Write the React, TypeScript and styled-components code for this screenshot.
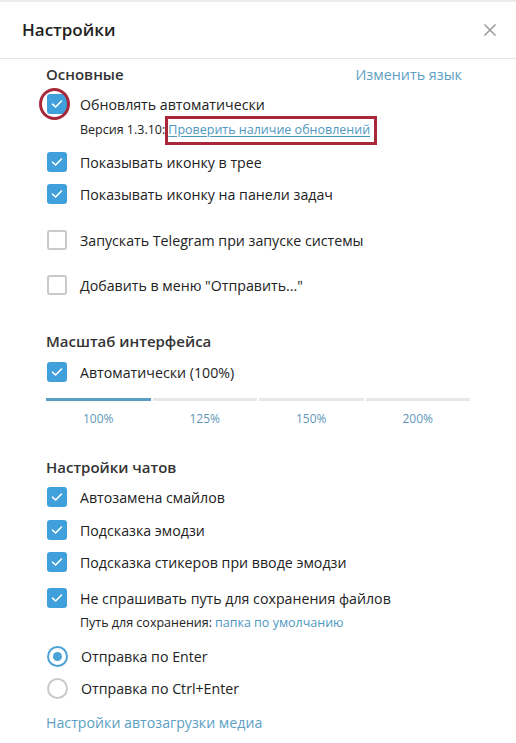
import React from "react";
import styled, { createGlobalStyle } from "styled-components";

const Global = createGlobalStyle`
  html, body { margin: 0; padding: 0; background: #fff; }
  body { font-family: "Open Sans", "Noto Sans", Arial, sans-serif; color: #222; }
  * { box-sizing: border-box; }
`;

const Page = styled.div`
  width: 516px;
  height: 743px;
  background: #fff;
  border-top: 2px solid #ececec;
  position: relative;
  overflow: hidden;
`;

const Header = styled.div`
  height: 57px;
  display: flex;
  align-items: center;
  justify-content: space-between;
  padding: 0 18px 0 22px;
  border-bottom: 1px solid #e4e4e4;
`;

const Title = styled.div`
  font-size: 17px;
  font-weight: 600;
  color: #222;
  margin-top: -1px;
`;

const CloseBtn = styled.div`
  width: 16px;
  height: 16px;
  display: flex;
  align-items: center;
  justify-content: center;
`;

const Body = styled.div`
  padding: 3px 46px 0 46px;
  display: flex;
  flex-direction: column;
`;

const SectionHead = styled.div<{ $mt?: number }>`
  height: 24px;
  margin-top: ${(p) => p.$mt ?? 0}px;
  display: flex;
  align-items: center;
  justify-content: space-between;
  font-size: 15px;
  font-weight: 600;
  color: #333;
`;

const HeadLink = styled.span`
  font-weight: 400;
  color: #5c9fc3;
  font-size: 14.3px;
  margin-right: 8px;
`;

const Row = styled.div<{ $mt?: number; $h?: number }>`
  height: ${(p) => p.$h ?? 32}px;
  margin-top: ${(p) => p.$mt ?? 0}px;
  display: flex;
  align-items: center;
  gap: 13px;
  font-size: 14.2px;
  color: #222;
  position: relative;
`;

const Box = styled.div<{ $on: boolean }>`
  width: 20px;
  height: 20px;
  border-radius: 3px;
  flex: none;
  margin-left: 1px;
  display: flex;
  align-items: center;
  justify-content: center;
  background: ${(p) => (p.$on ? "#40a0db" : "#fff")};
  border: ${(p) => (p.$on ? "none" : "2px solid #c9c9c9")};
`;

const Radio = styled.div<{ $on: boolean }>`
  width: 21px;
  height: 21px;
  border-radius: 50%;
  flex: none;
  margin-left: 1px;
  display: flex;
  align-items: center;
  justify-content: center;
  border: 2px solid ${(p) => (p.$on ? "#4aa2d6" : "#c9c9c9")};
  &::after {
    content: "";
    display: ${(p) => (p.$on ? "block" : "none")};
    width: 9px;
    height: 9px;
    border-radius: 50%;
    background: #4aa2d6;
  }
`;

const SubLine = styled.div<{ $mt?: number }>`
  height: 14px;
  margin-top: ${(p) => p.$mt ?? 0}px;
  padding-left: 34px;
  display: flex;
  align-items: center;
  font-size: 12.5px;
  color: #222;
  position: relative;
`;

const Link = styled.span<{ $u?: boolean }>`
  color: #4e97bf;
  text-decoration: ${(p) => (p.$u ? "underline" : "none")};
  text-underline-offset: 2px;
  margin-left: 3px;
`;

const RedRect = styled.div`
  position: absolute;
  left: 119px;
  top: -6px;
  width: 212px;
  height: 29px;
  border: 3px solid #a8283a;
  pointer-events: none;
`;

const RedCircle = styled.div`
  position: absolute;
  left: -7px;
  top: 2px;
  width: 31px;
  height: 32px;
  border-radius: 50%;
  border: 3px solid #a8283a;
  pointer-events: none;
`;

const Track = styled.div`
  margin-top: 10px;
  display: grid;
  grid-template-columns: repeat(4, 1fr);
  column-gap: 2px;
  width: 424px;
`;

const Seg = styled.div<{ $on: boolean }>`
  height: 3px;
  background: ${(p) => (p.$on ? "#5a9cc2" : "#e7e7e7")};
`;

const ScaleLabels = styled.div`
  margin-top: 10px;
  display: grid;
  grid-template-columns: repeat(4, 1fr);
  column-gap: 2px;
  width: 424px;
`;

const ScaleLabel = styled.div`
  height: 16px;
  line-height: 16px;
  text-align: center;
  font-size: 12px;
  color: #5e97b8;
`;

const BottomLink = styled.div<{ $mt?: number }>`
  height: 24px;
  margin-top: ${(p) => p.$mt ?? 0}px;
  display: flex;
  align-items: center;
  font-size: 14.2px;
  color: #5c9fc3;
`;

const Check = () => (
  <svg width="12" height="10" viewBox="0 0 12 10">
    <path d="M1.5 5.2 L4.6 8 L10.5 2" fill="none" stroke="#fff" strokeWidth="1.6" strokeLinecap="round" strokeLinejoin="round" />
  </svg>
);

const CB = ({ on, label, mt, children }: { on: boolean; label: string; mt?: number; children?: React.ReactNode }) => (
  <Row $mt={mt}>
    <Box $on={on}>{on && <Check />}</Box>
    <span>{label}</span>
    {children}
  </Row>
);

const RB = ({ on, label, mt }: { on: boolean; label: string; mt?: number }) => (
  <Row $mt={mt}>
    <Radio $on={on} />
    <span>{label}</span>
  </Row>
);

export default function App() {
  const scales = ["100%", "125%", "150%", "200%"];
  return (
    <>
      <Global />
      <Page>
        <Header>
          <Title>Настройки</Title>
          <CloseBtn>
            <svg width="14" height="14" viewBox="0 0 14 14">
              <path d="M1.5 1.5 L12.5 12.5 M12.5 1.5 L1.5 12.5" stroke="#9a9a9a" strokeWidth="1.5" />
            </svg>
          </CloseBtn>
        </Header>
        <Body>
          <SectionHead>
            <span>Основные</span>
            <HeadLink>Изменить язык</HeadLink>
          </SectionHead>
          <Row $h={36}>
            <Box $on>
              <Check />
            </Box>
            <span>Обновлять автоматически</span>
            <RedCircle />
          </Row>
          <SubLine>
            Версия 1.3.10:<Link $u>Проверить наличие обновлений</Link>
            <RedRect />
          </SubLine>
          <CB on label="Показывать иконку в трее" mt={10} />
          <CB on label="Показывать иконку на панели задач" />
          <CB on={false} label="Запускать Telegram при запуске системы" mt={14} />
          <CB on={false} label={'Добавить в меню "Отправить..."'} mt={13} />

          <SectionHead $mt={28}>
            <span>Масштаб интерфейса</span>
          </SectionHead>
          <CB on label="Автоматически (100%)" mt={3} />
          <Track>
            {scales.map((s, i) => (
              <Seg key={s} $on={i === 0} />
            ))}
          </Track>
          <ScaleLabels>
            {scales.map((s) => (
              <ScaleLabel key={s}>{s}</ScaleLabel>
            ))}
          </ScaleLabels>

          <SectionHead $mt={28}>
            <span>Настройки чатов</span>
          </SectionHead>
          <CB on label="Автозамена смайлов" mt={2} />
          <CB on label="Подсказка эмодзи" mt={1} />
          <CB on label="Подсказка стикеров при вводе эмодзи" />
          <CB on label="Не спрашивать путь для сохранения файлов" mt={4} />
          <SubLine $mt={1}>
            Путь для сохранения:<Link>папка по умолчанию</Link>
          </SubLine>
          <RB on label="Отправка по Enter" mt={11} />
          <RB on={false} label="Отправка по Ctrl+Enter" />
          <BottomLink $mt={6}>Настройки автозагрузки медиа</BottomLink>
        </Body>
      </Page>
    </>
  );
}
